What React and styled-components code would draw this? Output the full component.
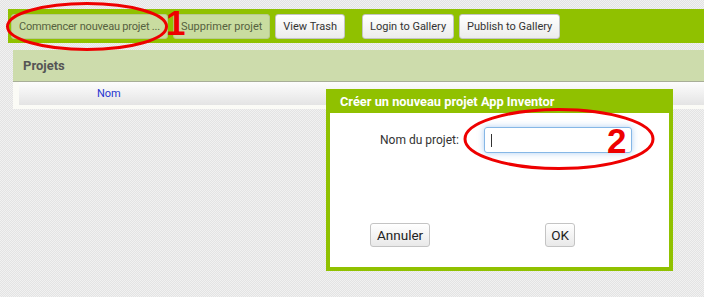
import React from 'react';
import styled, { createGlobalStyle } from 'styled-components';

const GlobalStyle = createGlobalStyle`
  html, body {
    margin: 0;
    padding: 0;
  }
  body {
    font-family: Roboto, "Liberation Sans", Arial, sans-serif;
    background: #ebebeb;
  }
`;

const Page = styled.div`
  position: relative;
  width: 704px;
  height: 297px;
  overflow: hidden;
  padding-top: 9px;
  box-sizing: border-box;
  background-color: #ebebeb;
  background-image: repeating-conic-gradient(#e3e3e3 0 25%, #f1f1f1 0 50%);
  background-size: 2px 2px;
`;

const Toolbar = styled.div`
  margin-left: 8px;
  height: 34px;
  background: #90c100;
  display: flex;
  align-items: center;
  gap: 5px;
  padding-left: 3px;
`;

const ToolButton = styled.button`
  height: 25px;
  padding: 0 ${p => p.$pad || 7}px;
  margin-left: ${p => p.$gap || 0}px;
  font-family: Roboto, "Liberation Sans", sans-serif;
  font-size: 11px;
  letter-spacing: ${p => p.$tight ? '-0.2px' : 'normal'};
  border-radius: 3px;
  cursor: pointer;
  white-space: nowrap;
  color: ${p => (p.$disabled ? '#56613f' : '#333')};
  border: 1px solid ${p => (p.$disabled ? '#b7c98f' : '#c4c4c4')};
  background: ${p =>
    p.$disabled
      ? '#c9dca0'
      : 'linear-gradient(#ffffff, #ececec)'};
`;

const Panel = styled.div`
  margin: 7px 0 0 13px;
`;

const PanelHeader = styled.div`
  height: 31px;
  background: #cddcac;
  border-bottom: 1px solid #a8ae98;
  display: flex;
  align-items: center;
  padding-left: 10px;
  font-size: 13px;
  font-weight: bold;
  color: #555;
`;

const PanelBody = styled.div`
  background: #fbfbf6;
  padding: 0 0 4px 6px;
`;

const TableHead = styled.div`
  height: 23px;
  background: linear-gradient(#fdfdfd, #e4e4e4);
  display: flex;
  align-items: center;
  padding-left: 78px;
`;

const ColumnTitle = styled.span`
  font-size: 11px;
  color: #1f35d0;
`;

const Dialog = styled.div`
  position: absolute;
  left: 326px;
  top: 89px;
  width: 347px;
  height: 182px;
  box-sizing: border-box;
  background: #90c100;
  padding: 0 4px 4px;
  display: flex;
  flex-direction: column;
`;

const DialogTitle = styled.div`
  height: 24px;
  display: flex;
  align-items: center;
  padding-left: 10px;
  color: #fff;
  font-size: 12.8px;
  font-weight: bold;
`;

const DialogBody = styled.div`
  flex: 1;
  background: #fff;
  display: flex;
  flex-direction: column;
`;

const FieldRow = styled.div`
  display: flex;
  align-items: center;
  gap: 25px;
  padding: 14px 0 0 50px;
`;

const FieldLabel = styled.label`
  font-size: 12px;
  color: #333;
`;

const InputBox = styled.div`
  width: 148px;
  height: 26px;
  box-sizing: border-box;
  border: 1px solid #86b7e6;
  border-radius: 3px;
  box-shadow: 0 0 6px rgba(110, 165, 230, 0.55);
  display: flex;
  align-items: center;
  padding-left: 6px;
`;

const Caret = styled.span`
  width: 1px;
  height: 13px;
  background: #333;
`;

const DialogFooter = styled.div`
  margin-top: auto;
  margin-bottom: 20px;
  display: flex;
  justify-content: space-between;
  padding: 0 94px 0 40px;
`;

const DialogButton = styled.button`
  height: 24px;
  padding: 0 ${p => p.$pad || 6}px;
  font-family: Roboto, "Liberation Sans", sans-serif;
  font-size: 13.5px;
  color: #222;
  border: 1px solid #c4c4c4;
  border-radius: 3px;
  background: linear-gradient(#ffffff, #e9e9e9);
  cursor: pointer;
`;

const Marks = styled.svg`
  position: absolute;
  left: 0;
  top: 0;
  pointer-events: none;
`;

const MarkText = styled.text`
  font-family: "Liberation Sans", Arial, sans-serif;
  font-weight: bold;
  font-size: 35px;
  fill: #ee0000;
`;

export default function App() {
  return (
    <>
      <GlobalStyle />
      <Page>
        <Toolbar>
          <ToolButton $disabled $pad={7} $tight>Commencer nouveau projet ...</ToolButton>
          <ToolButton $disabled>Supprimer projet</ToolButton>
          <ToolButton>View Trash</ToolButton>
          <ToolButton $gap={12}>Login to Gallery</ToolButton>
          <ToolButton>Publish to Gallery</ToolButton>
        </Toolbar>

        <Panel>
          <PanelHeader>Projets</PanelHeader>
          <PanelBody>
            <TableHead>
              <ColumnTitle>Nom</ColumnTitle>
            </TableHead>
          </PanelBody>
        </Panel>

        <Dialog>
          <DialogTitle>Créer un nouveau projet App Inventor</DialogTitle>
          <DialogBody>
            <FieldRow>
              <FieldLabel>Nom du projet:</FieldLabel>
              <InputBox>
                <Caret />
              </InputBox>
            </FieldRow>
            <DialogFooter>
              <DialogButton>Annuler</DialogButton>
              <DialogButton $pad={5}>OK</DialogButton>
            </DialogFooter>
          </DialogBody>
        </Dialog>

        <Marks width="704" height="297" viewBox="0 0 704 297">
          <ellipse cx="87" cy="26.5" rx="79.5" ry="23" fill="none" stroke="#ee0000" strokeWidth="3" />
          <MarkText x="166" y="35">1</MarkText>
          <ellipse cx="559" cy="139" rx="94" ry="29.5" fill="none" stroke="#ee0000" strokeWidth="3" />
          <MarkText x="607" y="153">2</MarkText>
        </Marks>
      </Page>
    </>
  );
}
